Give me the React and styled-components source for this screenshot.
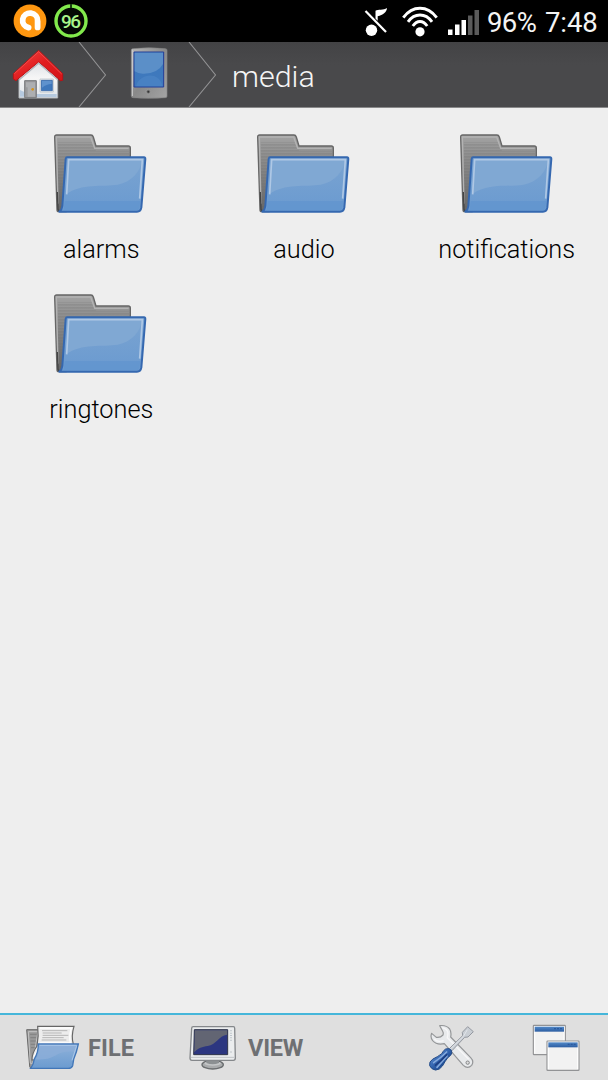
import React from 'react';
import styled, { createGlobalStyle } from 'styled-components';

const GlobalStyle = createGlobalStyle`
  * { box-sizing: border-box; }
  body { margin: 0; background: #eee; font-family: Roboto, "Liberation Sans", sans-serif; }
  svg { display: block; flex: none; }
`;

const Screen = styled.div`
  width: 100%;
  height: 1080px;
  display: flex;
  flex-direction: column;
  background: #eeeeee;
  overflow: hidden;
`;

const StatusBar = styled.header`
  height: 42px;
  flex: none;
  display: flex;
  align-items: center;
  justify-content: space-between;
  padding: 0 12px 0 13px;
  background: #000;
`;

const StatusGroup = styled.div`
  display: flex;
  align-items: center;
  gap: ${(p) => p.$gap}px;
`;

const StatusText = styled.span`
  width: ${(p) => p.$width}px;
  font-size: 27.5px;
  line-height: 42px;
  padding-top: 4px;
  letter-spacing: ${(p) => p.$spacing}px;
  color: #f4f4f4;
  white-space: nowrap;
`;

const Breadcrumb = styled.nav`
  height: 66px;
  flex: none;
  display: flex;
  align-items: stretch;
  background: linear-gradient(#434345, #49494b 35%, #49494b);
  border-bottom: 1px solid #89898a;
`;

const Crumb = styled.div`
  width: ${(p) => p.$width}px;
  padding-left: ${(p) => p.$inset}px;
  padding-bottom: ${(p) => p.$lift || 0}px;
  display: flex;
  align-items: center;
`;

const CrumbLabel = styled.span`
  font-size: 30.4px;
  font-weight: 300;
  line-height: 65px;
  padding: 2px 0 0 15px;
  color: #f5f5f5;
`;

const FolderGrid = styled.main`
  flex: 1;
  display: grid;
  grid-template-columns: repeat(3, 1fr);
  grid-auto-rows: 160px;
  padding-top: 24px;
`;

const FolderItem = styled.div`
  display: flex;
  flex-direction: column;
  align-items: center;
`;

const FolderName = styled.span`
  margin-top: 17px;
  font-size: 25.3px;
  font-weight: 300;
  line-height: 34px;
  color: #000;
  white-space: nowrap;
`;

const BottomBar = styled.footer`
  height: 67px;
  flex: none;
  display: flex;
  align-items: center;
  border-top: 2px solid #45b6da;
  background: #dfdfdf;
`;

const BarButton = styled.div`
  width: ${(p) => p.$width}px;
  padding-left: ${(p) => p.$inset}px;
  display: flex;
  align-items: center;
  gap: ${(p) => p.$gap || 0}px;
`;

const BarLabel = styled.span`
  font-size: 23.5px;
  font-weight: 700;
  line-height: 30px;
  padding-top: 1px;
  letter-spacing: ${(p) => p.$spacing || 0}px;
  color: #6e7073;
`;

const Spacer = styled.div`
  flex: 1;
`;

function AppBadge() {
  return (
    <svg width="34" height="34" viewBox="0 0 34 34">
      <circle cx="17" cy="17" r="16.4" fill="#ff9710" />
      <path d="M15.6 23.6A7.5 7.3 0 1 1 24.6 17V23.4" fill="none" stroke="#fff" strokeWidth="5.8" strokeLinecap="round" />
    </svg>
  );
}

function BatteryBadge() {
  return (
    <svg width="34" height="34" viewBox="0 0 34 34">
      <circle cx="17" cy="17" r="15" fill="#040804" stroke="#82e94c" strokeWidth="3.4" />
      <path d="M17 0V4" stroke="#194010" strokeWidth="2" />
      <text x="17" y="24" textAnchor="middle" fontFamily="Roboto" fontSize="19" fontWeight="500" fill="#a9f48a" textLength="20">96</text>
    </svg>
  );
}

function MutedNote() {
  return (
    <svg width="24" height="30" viewBox="0 0 24 30">
      <circle cx="7.5" cy="24.2" r="5.7" fill="#fff" />
      <path d="M11.5 12.5V4.8C14 3 19.5 4.6 23 2C22.5 6.8 19 8.8 13.7 10.2V14.8Z" fill="#fff" />
      <path d="M1.5 5L22 26" stroke="#fff" strokeWidth="2.2" />
    </svg>
  );
}

function Wifi() {
  return (
    <svg width="36" height="31" viewBox="0 0 36 31">
      <g fill="none" stroke="#fff" strokeWidth="2.9">
        <path d="M1.3 11.6C10.5-.9 25.5-.9 34.7 11.6" />
        <path d="M6 15.8C12.5 6.7 23.5 6.7 30 15.8" />
        <path d="M10.8 20C15 14 21 14 25.2 20" />
      </g>
      <circle cx="18" cy="25.8" r="4.6" fill="#fff" />
    </svg>
  );
}

function Signal() {
  return (
    <svg width="32" height="27" viewBox="0 -2 32 27">
      <path d="M1 19.5H5.5V25H1ZM8 14.5H12.5V25H8ZM14.5 10H19V25H14.5Z" fill="#fff" />
      <path d="M21 5.5H25.5V25H21ZM27.5 0H32V25H27.5Z" fill="#5b5b5b" />
    </svg>
  );
}

function House() {
  return (
    <svg width="52" height="52" viewBox="36 147 156 156">
      <defs>
        <linearGradient id="roof" x1="0" y1="0" x2="1" y2="1">
          <stop offset="0" stopColor="#f24a45" /><stop offset=".5" stopColor="#e11d20" /><stop offset="1" stopColor="#d31418" />
        </linearGradient>
        <linearGradient id="wall" x1="0" y1="0" x2="0" y2="1">
          <stop offset="0" stopColor="#d8dde3" /><stop offset=".5" stopColor="#f6f6f6" /><stop offset="1" stopColor="#e1e6ea" />
        </linearGradient>
      </defs>
      <path d="M57 228L116 175L173 228V294H57Z" fill="url(#wall)" stroke="#aeb3b8" strokeWidth="3" />
      <path d="M60 270L73 276V290H60ZM108 282H170V291H108Z" fill="#b6cadf" />
      <path d="M116 151L188 221V241L181 242L116 186L48 242L40 237V221Z" fill="url(#roof)" stroke="#b81216" strokeWidth="3" strokeLinejoin="round" />
      <path d="M43 221L116 155L185 222" fill="none" stroke="#ee4e4b" strokeWidth="3" />
      <path d="M57 240L116 190L173 239" fill="none" stroke="#b3b8bf" strokeWidth="4" />
      <path d="M74 242H109V293H74Z" fill="#999a9c" stroke="#77797c" strokeWidth="3" />
      <path d="M78 247H105V290H83V262H78Z" fill="#adafb1" />
      <circle cx="98" cy="268" r="4" fill="#d3921d" />
      <path d="M120 237H160V276H120Z" fill="#f2f4f5" stroke="#b1b8bf" strokeWidth="2" />
      <path d="M124 241H157V272H124Z" fill="#3f78bc" stroke="#24599e" strokeWidth="2" />
      <path d="M126 243H155V252Q142 251 126 263Z" fill="#5f92cd" />
    </svg>
  );
}

function Chevron() {
  return (
    <svg width="29" height="65" viewBox="0 0 29 65">
      <path d="M1 0L27.5 33L1 65" fill="none" stroke="#929294" strokeWidth="1.1" />
    </svg>
  );
}

function Phone() {
  return (
    <svg width="38" height="52" viewBox="90 22 114 156">
      <defs>
        <linearGradient id="phoneBody" x1="0" y1="0" x2="1" y2="1">
          <stop offset="0" stopColor="#b8b8b8" /><stop offset=".5" stopColor="#898989" /><stop offset="1" stopColor="#a4a4a4" />
        </linearGradient>
        <linearGradient id="phoneScreen" x1="0" y1="0" x2="0" y2="1">
          <stop offset="0" stopColor="#3b78bd" /><stop offset="1" stopColor="#4079bd" />
        </linearGradient>
      </defs>
      <path d="M94 31Q94 27 99 27Q148 22 196 27Q201 27 201 32V170Q201 174 196 174Q148 178 99 174Q94 174 94 169Z" fill="url(#phoneBody)" stroke="#858585" strokeWidth="2" />
      <path d="M97 30V169" stroke="#cecece" strokeWidth="3" />
      <path d="M102 37H191V142H102Z" fill="url(#phoneScreen)" stroke="#243e98" strokeWidth="3" />
      <path d="M104 39H189V73Q174 101 132 102Q115 103 104 95Z" fill="#5b8fc8" />
      <path d="M108 140C116 103 177 91 188 140Z" fill="#4d85c6" opacity=".65" />
      <circle cx="145" cy="156" r="7" fill="#757575" stroke="#a0a0a0" strokeWidth="2" />
      <circle cx="145" cy="156" r="3" fill="#333" />
    </svg>
  );
}

function Folder({ id }) {
  const back = `folder-back-${id}`;
  const front = `folder-front-${id}`;
  const lines = `folder-lines-${id}`;
  return (
    <svg width="96" height="84" viewBox="70 35 288 252">
      <defs>
        <linearGradient id={back} x1="0" y1="0" x2="0" y2="1">
          <stop offset="0" stopColor="#a3a3a3" /><stop offset=".3" stopColor="#8e8e8e" /><stop offset="1" stopColor="#646464" />
        </linearGradient>
        <linearGradient id={front} x1="0" y1="0" x2="0" y2="1">
          <stop offset="0" stopColor="#7ba4d1" /><stop offset="1" stopColor="#6a9ad0" />
        </linearGradient>
        <pattern id={lines} width="8" height="9" patternUnits="userSpaceOnUse">
          <path d="M0 2H8" stroke="#707070" strokeWidth="3" />
        </pattern>
      </defs>
      <path d="M75 50Q75 44 81 44H184Q189 44 191 50L199 77H296Q302 77 302 83V130L110 274H87Q82 274 82 268Z" fill={`url(#${back})`} stroke="#666" strokeWidth="4" />
      <path d="M84 65H190L199 91H298V125L105 268H86Z" fill={`url(#${lines})`} opacity=".5" />
      <path d="M85 250L80 50H183L195 84H297" fill="none" stroke="#b3b3b3" strokeWidth="4" />
      <path d="M83 215L85 267Q86 273 94 273" fill="none" stroke="#444" strokeWidth="4" />
      <path d="M112 111H343Q347 111 347 116L335 262Q333 274 322 274H89Q97 268 98 257L108 116Q109 111 112 111Z" fill={`url(#${front})`} stroke="#3568b0" strokeWidth="6" strokeLinejoin="round" />
      <path d="M117 118H338C332 153 308 184 264 193C220 200 155 188 109 222Z" fill="#80a8d3" />
      <path d="M105 242H332L329 264Q327 270 321 270H102Z" fill="#6094ce" opacity=".65" />
      <path d="M111 222L117 118H338L330 235" fill="none" stroke="#afc8e5" strokeWidth="5" />
    </svg>
  );
}

function FileIcon() {
  return (
    <svg width="56" height="48" viewBox="75 49 168 144">
      <defs>
        <linearGradient id="openFolder" x1="0" y1="0" x2="0" y2="1">
          <stop offset="0" stopColor="#8fb2da" /><stop offset="1" stopColor="#6b9bd0" />
        </linearGradient>
      </defs>
      <path d="M80 66H121L100 181H93Q89 181 89 175Z" fill="#999" stroke="#696969" strokeWidth="3" />
      <path d="M85 72H114L98 167H91Z" fill="none" stroke="#c3c3c3" strokeWidth="3" />
      <path d="M90 80H110M91 90H108M91 100H107M92 110H106M93 120H104" stroke="#747474" strokeWidth="2" />
      <path d="M113 56H222Q213 85 220 110L176 154L96 157Q96 136 111 115Q117 86 113 56Z" fill="#ededed" stroke="#666" strokeWidth="3.5" />
      <path d="M120 61H214Q207 84 211 106H122Q117 127 102 146" fill="none" stroke="#fff" strokeWidth="4" />
      <path d="M126 69H202M128 76H185M128 83H205M127 90H191M125 97H199" stroke="#aaa" strokeWidth="2.5" />
      <path d="M115 109H235Q230 134 221 155L218 174Q215 182 205 182H92Q101 171 103 154Q115 135 115 109Z" fill="url(#openFolder)" stroke="#4176b8" strokeWidth="4" />
      <path d="M119 113H230L224 132Q188 128 165 144Q139 158 107 155Q119 136 119 113Z" fill="#8caed8" opacity=".8" />
      <path d="M230 114L216 158M119 113H230" stroke="#a9c6e7" strokeWidth="3" />
    </svg>
  );
}

function Monitor() {
  return (
    <svg width="48" height="46" viewBox="27 46 144 138">
      <ellipse cx="98" cy="165" rx="32" ry="13" fill="#a9abac" stroke="#6a6d6f" strokeWidth="4" />
      <ellipse cx="98" cy="161" rx="25" ry="7" fill="#c5c7c8" />
      <path d="M79 149H117V160Q98 168 79 160Z" fill="#8c9092" />
      <path d="M40 51H160Q164 51 164 56L166 145Q166 152 160 152H36Q30 152 30 145L35 56Q35 51 40 51Z" fill="#ebedee" stroke="#85888b" strokeWidth="4" />
      <path d="M33 143H163" stroke="#c1c5c8" strokeWidth="3" />
      <path d="M43 60H143V135H41Z" fill="#2c3680" stroke="#303549" strokeWidth="3" />
      <path d="M45 62H141V75C116 78 108 106 83 109C67 111 55 115 43 128Z" fill="#626573" />
      <path d="M153 62V96" stroke="#a9b3bd" strokeWidth="4" strokeDasharray="3 4" />
      <circle cx="153" cy="127" r="2" fill="#adb4ba" />
    </svg>
  );
}

function Tools() {
  return (
    <svg width="46" height="48" viewBox="39 49 138 144">
      <defs>
        <linearGradient id="handle" x1="0" y1="0" x2="1" y2="1">
          <stop offset="0" stopColor="#8aaee0" /><stop offset=".4" stopColor="#3d6fb9" /><stop offset=".65" stopColor="#214f98" /><stop offset="1" stopColor="#477cbe" />
        </linearGradient>
      </defs>
      <path d="M74 54Q93 51 104 64Q110 73 107 88L167 150Q178 161 170 173Q158 185 145 173L88 108Q65 113 53 99Q45 89 50 77L64 89Q76 91 84 82Q86 75 83 71Z" fill="#e8eaec" stroke="#949698" strokeWidth="3.5" strokeLinejoin="round" />
      <path d="M82 60Q98 64 99 77L97 90L161 155M58 94Q67 105 86 99" fill="none" stroke="#f7f7f8" strokeWidth="4" />
      <circle cx="158" cy="165" r="5" fill="#ddd" stroke="#858789" strokeWidth="3" />
      <path d="M103 123L143 84L142 74L158 57L175 72L159 88L149 89L111 129Z" fill="#c9ced4" stroke="#9498a0" strokeWidth="3" strokeLinejoin="round" />
      <path d="M106 124L146 85L157 66" fill="none" stroke="#e2e6eb" strokeWidth="3" />
      <path d="M92 124Q103 120 109 128Q113 136 107 143Q98 148 90 162Q83 177 73 184Q61 191 51 183Q40 175 45 163Q50 154 67 147Q83 139 86 129Z" fill="url(#handle)" stroke="#244b86" strokeWidth="3" />
      <path d="M56 165Q77 151 95 133M66 179Q80 164 96 145" fill="none" stroke="#84a9dc" strokeWidth="5" strokeLinecap="round" />
      <path d="M60 174Q78 160 96 140" fill="none" stroke="#1d3f83" strokeWidth="5" />
    </svg>
  );
}

function Windows() {
  return (
    <svg width="48" height="48" viewBox="350 46 144 144">
      <defs>
        <linearGradient id="title" x1="0" y1="0" x2="0" y2="1">
          <stop offset="0" stopColor="#5289c8" /><stop offset="1" stopColor="#2c5da2" />
        </linearGradient>
      </defs>
      {[[354, 50], [395, 97]].map(([x, y]) => (
        <g key={x}>
          <rect x={x} y={y} width="96" height="88" rx="2" fill="#f2f2f2" stroke="#929395" strokeWidth="3.5" />
          <path d={`M${x + 4} ${y + 84}V${y + 4}H${x + 92}V${y + 84}`} fill="none" stroke="#fff" strokeWidth="3" />
          <rect x={x + 4} y={y + 4} width="88" height="15" fill="url(#title)" />
          <path d={`M${x + 62} ${y + 10}H${x + 89}`} stroke="#2b5a9f" strokeWidth="4" strokeDasharray="6 3" />
        </g>
      ))}
    </svg>
  );
}

const folders = [
  { name: 'alarms' },
  { name: 'audio' },
  { name: 'notifications' },
  { name: 'ringtones' },
];

export default function App() {
  return (
    <Screen>
      <GlobalStyle />
      <StatusBar>
        <StatusGroup $gap={7}>
          <AppBadge />
          <BatteryBadge />
        </StatusGroup>
        <StatusGroup $gap={9}>
          <StatusGroup $gap={14}>
            <MutedNote />
            <Wifi />
          </StatusGroup>
          <StatusGroup $gap={8}>
            <Signal />
            <StatusText $width={49} $spacing={-0.6}>96%</StatusText>
          </StatusGroup>
          <StatusText $width={51} $spacing={-0.1}>7:48</StatusText>
        </StatusGroup>
      </StatusBar>
      <Breadcrumb>
        <Crumb $width={78} $inset={12}><House /></Crumb>
        <Chevron />
        <Crumb $width={81} $inset={23} $lift={3}><Phone /></Crumb>
        <Chevron />
        <CrumbLabel>media</CrumbLabel>
      </Breadcrumb>
      <FolderGrid>
        {folders.map(({ name }) => (
          <FolderItem key={name}>
            <Folder id={name} />
            <FolderName>{name}</FolderName>
          </FolderItem>
        ))}
      </FolderGrid>
      <BottomBar>
        <BarButton $width={164} $inset={25} $gap={7}>
          <FileIcon />
          <BarLabel $spacing={0.1}>FILE</BarLabel>
        </BarButton>
        <BarButton $width={164} $inset={25} $gap={11}>
          <Monitor />
          <BarLabel $spacing={-0.2}>VIEW</BarLabel>
        </BarButton>
        <Spacer />
        <BarButton $width={104}><Tools /></BarButton>
        <BarButton $width={76}><Windows /></BarButton>
      </BottomBar>
    </Screen>
  );
}
